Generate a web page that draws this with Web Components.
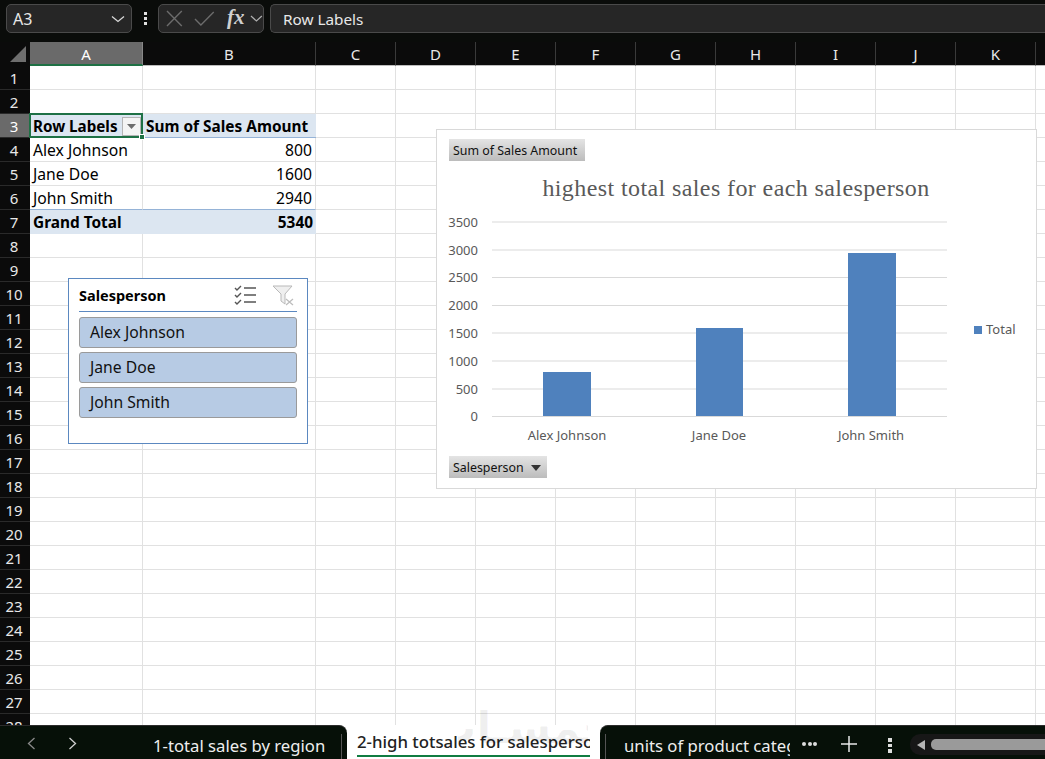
<!DOCTYPE html>
<html lang="en"><head><meta charset="utf-8"><title>Sales</title>
<style>
html,body{margin:0;padding:0;height:100%;overflow:hidden;background:#0a0a0a}
body{font-family:"Noto Sans","Open Sans",sans-serif}
</style></head><body>
<x-app>
  <x-formula-bar slot="top" name="A3" value="Row Labels"></x-formula-bar>
  <x-sheet slot="main">
    <x-slicer slot="over" title="Salesperson" items="Alex Johnson|Jane Doe|John Smith"></x-slicer>
    <x-chart slot="over"></x-chart>
  </x-sheet>
  <x-tabbar slot="bottom"></x-tabbar>
  <x-watermark slot="over"></x-watermark>
</x-app>
<script>
const def=(name,html,setup)=>customElements.define(name,class extends HTMLElement{
  constructor(){super();this.attachShadow({mode:'open'});}
  connectedCallback(){this.shadowRoot.innerHTML=typeof html==='function'?html(this):html;if(setup)setup(this);}
});

def('x-app',`<style>
:host{display:flex;flex-direction:column;width:1045px;height:759px;overflow:hidden;background:#0a0a0a;position:relative}
</style><slot name="top"></slot><slot name="main"></slot><slot name="bottom"></slot><slot name="over"></slot>`);

def('x-watermark',`<style>
:host{position:absolute;left:458px;top:703px;width:130px;height:50px;display:flex;justify-content:center;overflow:hidden;pointer-events:none;font:700 44px/50px "DejaVu Sans",sans-serif;color:rgba(0,0,0,.06);white-space:nowrap}
</style><span dir="rtl">خمسـات</span>`);

def('x-formula-bar',el=>`<style>
:host{display:flex;box-sizing:border-box;height:42px;padding:4px 0 9px 6px;align-items:stretch;background:#0a0c0a;color:#e8e8e8;font:15.300px "Noto Sans",sans-serif}
.box{box-sizing:border-box;background:#262626;border:1px solid #4a4a4a;border-radius:5px;display:flex;align-items:center}
.name{width:126px;padding:0 6px 0 6px;justify-content:space-between;font-size:16px}
.grip{width:26px;display:flex;flex-direction:column;align-items:center;justify-content:center;gap:2px;box-sizing:border-box}
.grip i{width:3px;height:3px;background:#e0e0e0;display:block}
.fx{width:106px;padding-left:7px;gap:0}
.val{flex:1;margin-left:6px;padding-left:12px;border-right:0;border-radius:5px 0 0 5px}
.fxt{font:italic bold 21px "Liberation Serif",serif;color:#cfcfcf;width:25px;text-align:center;line-height:1;margin-top:-2px}
svg{display:block}
</style>
<div class="box name"><span>${el.getAttribute('name')}</span>
<svg width="14" height="8" viewBox="0 0 14 8"><path d="M1 1.500 7 6.500 13 1.500" fill="none" stroke="#d8d8d8" stroke-width="1.300"/></svg></div>
<div class="grip"><i></i><i></i><i></i></div>
<div class="box fx">
<svg width="17" height="17" viewBox="0 0 17 17"><path d="M1 1 16 16M16 1 1 16" stroke="#6c6c6c" stroke-width="1.400" fill="none"/></svg>
<svg style="margin-left:11px" width="21" height="15" viewBox="0 0 21 15"><path d="M1 8 7 14 20 1" stroke="#6c6c6c" stroke-width="1.400" fill="none"/></svg>
<span class="fxt" style="margin-left:9px">fx</span>
<svg style="margin-left:2px" width="13" height="7" viewBox="0 0 13 7"><path d="M1 1 6.500 6 12 1" fill="none" stroke="#b0b0b0" stroke-width="1.200"/></svg>
</div>
<div class="box val">${el.getAttribute('value')}</div>`);

def('x-sheet',()=>{
  const cols=['A','B','C','D','E','F','G','H','I','J','K',''];
  let h='<div class="corner"><svg width="17" height="16" viewBox="0 0 17 16"><path d="M16 0V16H0Z" fill="#6e6e6e"/></svg></div>';
  cols.forEach((c,i)=>h+=`<div class="ch${i==0?' sel':''}">${c}</div>`);
  const data={3:['Row Labels','Sum of Sales Amount'],4:['Alex Johnson','800'],5:['Jane Doe','1600'],6:['John Smith','2940'],7:['Grand Total','5340']};
  for(let r=1;r<=28;r++){
    h+=`<div class="rh${r==3?' sel':''}">${r}</div>`;
    cols.forEach((c,i)=>{
      let cl='c',t='',extra='';
      if(data[r]&&i<2){t=data[r][i];
        cl+=i==1&&r>3?' num':'';
        if(r==3)cl+=i==0?' head small':' head';
        if(r==7)cl+=' total';
        if(r==6)cl+=' pre';
      }
      if(r==3&&i==0)extra=`<span class="fb"><svg width="9" height="5" viewBox="0 0 9 5"><path d="M0 0H9L4.500 5Z" fill="#6d6d6d"/></svg></span><span class="cur"></span><span class="hnd"></span>`;
      h+=`<div class="${cl}">${t}${extra}</div>`;
    });
  }
  return `<style>
:host{display:block;flex:0 0 683px;height:683px;position:relative;overflow:hidden;background:#fff}
.g{display:grid;grid-template-columns:30px 113px 173px repeat(9,80px) 80px;grid-auto-rows:24px;font:15.700px/24px "Noto Sans",sans-serif;color:#000}
.corner{background:#0b0b0b;display:flex;align-items:flex-end;justify-content:flex-end;padding:0 3px 4px 0;box-sizing:border-box}
.ch{background:#0b0b0b;color:#e8e8e8;text-align:center;font-size:15px;border-right:1px solid #3a3a3a;border-bottom:1px solid #bdbdbd;box-sizing:border-box;line-height:24px}
.ch.sel{background:#6a6a6a;color:#fff;border-bottom:2px solid #1e7145;border-right:1px solid #888}
.rh{background:#0b0b0b;color:#e8e8e8;text-align:center;font-size:15px;border-bottom:1px solid #2a2a2a;box-sizing:border-box;padding-right:2px;line-height:24px}
.rh.sel{background:#6a6a6a;color:#fff}
.c{border-right:1px solid #e1e1e1;border-bottom:1px solid #e1e1e1;box-sizing:border-box;padding:0 3px;white-space:nowrap;position:relative}
.num{text-align:right}
.head{background:#dce6f1;font-weight:700;font-size:15.400px;line-height:26px;border-bottom-color:#95b3d7;border-right:0}
.head.small{font-size:15.200px;line-height:24px}
.total{background:#dce6f1;font-weight:700;font-size:15.400px;line-height:26px;border-right:0;border-bottom:0}
.pre{border-bottom-color:#95b3d7}
.fb{position:absolute;left:92px;top:3px;width:19px;height:19px;box-sizing:border-box;border:1px solid #b5b5b5;background:#f4f4f4;display:flex;align-items:center;justify-content:center}
.cur{position:absolute;left:-1px;top:-1px;width:114px;height:25px;box-sizing:border-box;border:2px solid #1e7145;z-index:3;pointer-events:none}
.hnd{position:absolute;left:109px;top:20px;background:#1e7145;border:1px solid #fff;box-sizing:content-box;z-index:4;width:4px;height:4px}
</style><div class="g">${h}</div><slot name="over"></slot>`;
});

def('x-slicer',el=>`<style>
:host{position:absolute;left:68px;top:236px;width:240px;height:166px;box-sizing:border-box;background:#fff;border:1px solid #5b88c0;padding:0 10px;color:#000;font:15.700px "Noto Sans",sans-serif;display:block}
.h{display:flex;align-items:center;height:32px;border-bottom:1px solid #5b88c0;font-weight:700;font-size:14.500px;margin-bottom:5px}
.h span{flex:1}
.b{box-sizing:border-box;height:31px;margin-bottom:4px;background:#b7cbe4;border:1px solid #9a9a9a;border-radius:3px;padding-left:10px;line-height:29px;color:#111}
svg{display:block}
</style><div class="h"><span>${el.getAttribute('title')}</span>
<svg width="22" height="20" viewBox="0 0 22 20" fill="none" stroke="#555" stroke-width="1.400"><path d="M1 3 3 5 7 1M1 10 3 12 7 8M1 17 3 19 7 15"/><path d="M10 3H22M10 10H22M10 17H22" stroke-width="1.600"/></svg>
<svg style="margin-left:16px;margin-right:3px" width="22" height="21" viewBox="0 0 22 21" fill="none"><path d="M1 1H20L13 9V19L9 16V9Z" stroke="#b9b9b9" fill="#efefef"/><path d="M14 14 21 20M21 14 14 20" stroke="#bdbdbd" stroke-width="1.300"/></svg></div>
${el.getAttribute('items').split('|').map(t=>`<div class="b">${t}</div>`).join('')}`);

def('x-chart',()=>{
  const gy=[[3500,222],[3000,250],[2500,277.500],[2000,305.500],[1500,333],[1000,361],[500,389],[0,416.500]];
  const tx=x=>x-437, ty=y=>y-130;
  let s='';
  gy.forEach(([v,y])=>{
    s+=`<line x1="${tx(492)}" x2="${tx(947)}" y1="${ty(y)}" y2="${ty(y)}" stroke="#d9d9d9"/>`;
    s+=`<text x="${tx(478)}" y="${ty(y+4.500)}" text-anchor="end" class="ax">${v}</text>`;
  });
  [[543,48,372],[696,47,328],[848,48,253]].forEach(([x,w,y])=>s+=`<rect x="${tx(x)}" y="${ty(y)}" width="${w}" height="${416-y}" fill="#4f81bd"/>`);
  [['Alex Johnson',567],['Jane Doe',719],['John Smith',871]].forEach(([t,x])=>s+=`<text x="${tx(x)}" y="${ty(440)}" text-anchor="middle" class="ax">${t}</text>`);
  return `<style>
:host{position:absolute;left:436px;top:87px;width:601px;height:360px;box-sizing:border-box;background:#fff;border:1px solid #d9d9d9;display:block}
svg{position:absolute;left:0;top:0}
.ax{font:13px "Noto Sans",sans-serif;fill:#595959}
.title{font:24px "Liberation Serif",serif;fill:#595959;letter-spacing:.4px}
.f{position:absolute;left:12px;background:linear-gradient(#e4e4e4,#bcbcbc);color:#111;font:12.400px/20px "Noto Sans",sans-serif;box-sizing:border-box;height:22px;padding:2px 8px 0 4px;white-space:nowrap;display:flex;align-items:center}
</style>
<svg width="599" height="358" viewBox="0 0 599 358">${s}
<text x="${tx(736)}" y="${ty(196)}" text-anchor="middle" class="title">highest total sales for each salesperson</text>
<rect x="${tx(974)}" y="${ty(326)}" width="8" height="8" fill="#4f81bd"/>
<text x="${tx(986)}" y="${ty(334)}" class="ax">Total</text></svg>
<div class="f" style="top:9px">Sum of Sales Amount</div>
<div class="f" style="top:326px;padding-right:6px">Salesperson<svg style="position:static;margin-left:7px" width="10" height="6" viewBox="0 0 10 6"><path d="M0 0H10L5 6Z" fill="#333"/></svg></div>`;
});

def('x-tabbar',()=>`<style>
:host{display:flex;height:34px;position:relative;overflow:hidden;background:#fff;font:16.700px "Noto Sans",sans-serif;color:#eee}
.left{width:347px;background:#061008;border-top:1px solid #2c2c2c;border-radius:0 8px 0 0;display:flex;align-items:center;box-sizing:border-box;position:relative}
.nav{position:absolute;top:11px}
.t1{position:absolute;left:153px;top:8px;white-space:nowrap}
.sep{position:absolute;width:1px;background:#555;top:8px;height:26px}
.active{width:253px;background:#fff;color:#222;box-sizing:border-box;padding:0 10px;position:relative;font-size:16.800px;font-weight:500}
.active span{display:block;width:233px;overflow:hidden;white-space:nowrap;line-height:34px;height:30px;border-bottom:2px solid #107c41}
.right{flex:1;background:#061008;border-top:1px solid #2c2c2c;border-radius:8px 0 0 0;position:relative;box-sizing:border-box}
.t3{position:absolute;left:24px;top:8px;width:166px;overflow:hidden;white-space:nowrap}
.more{position:absolute;left:202px;top:16px;display:flex;gap:1.500px}
.more i{width:4px;height:4px;border-radius:50%;background:#ddd;display:block}
.plus{position:absolute;left:241px;top:10px}
.kebab{position:absolute;left:288px;top:12px;display:flex;flex-direction:column;gap:2px}
.kebab i{width:4px;height:3.500px;background:#ddd;display:block}
.sb{position:absolute;left:310px;top:8px;right:0;height:21px;background:#171717;border-radius:10px 0 0 10px;display:flex;align-items:center;padding-left:7px}
.thumb{flex:1;height:11px;background:#9a9a9a;border-radius:5px 0 0 5px;margin-left:6px}
</style>
<div class="left">
<svg class="nav" style="left:27px" width="9" height="13" viewBox="0 0 9 13"><path d="M7.500 1 1.500 6.500 7.500 12" fill="none" stroke="#8a8a8a" stroke-width="1.300"/></svg>
<svg class="nav" style="left:68px" width="9" height="13" viewBox="0 0 9 13"><path d="M1.500 1 7.500 6.500 1.500 12" fill="none" stroke="#d0d0d0" stroke-width="1.300"/></svg>
<span class="t1">1-total sales by region</span><span class="sep" style="left:341px"></span></div>
<div class="active"><span>2-high totsales for salesperson</span></div>
<div class="right"><span class="sep" style="left:5px"></span><span class="t3">units of product category</span>
<div class="more"><i></i><i></i><i></i></div>
<svg class="plus" width="16" height="16" viewBox="0 0 16 16"><path d="M8 0V16M0 8H16" stroke="#e8e8e8" stroke-width="1.500"/></svg>
<div class="kebab"><i></i><i></i><i></i></div>
<div class="sb"><svg width="8" height="10" viewBox="0 0 8 10"><path d="M8 0V10L0 5Z" fill="#b5b5b5"/></svg><div class="thumb"></div></div>
</div>`);
</script>
</body></html>
